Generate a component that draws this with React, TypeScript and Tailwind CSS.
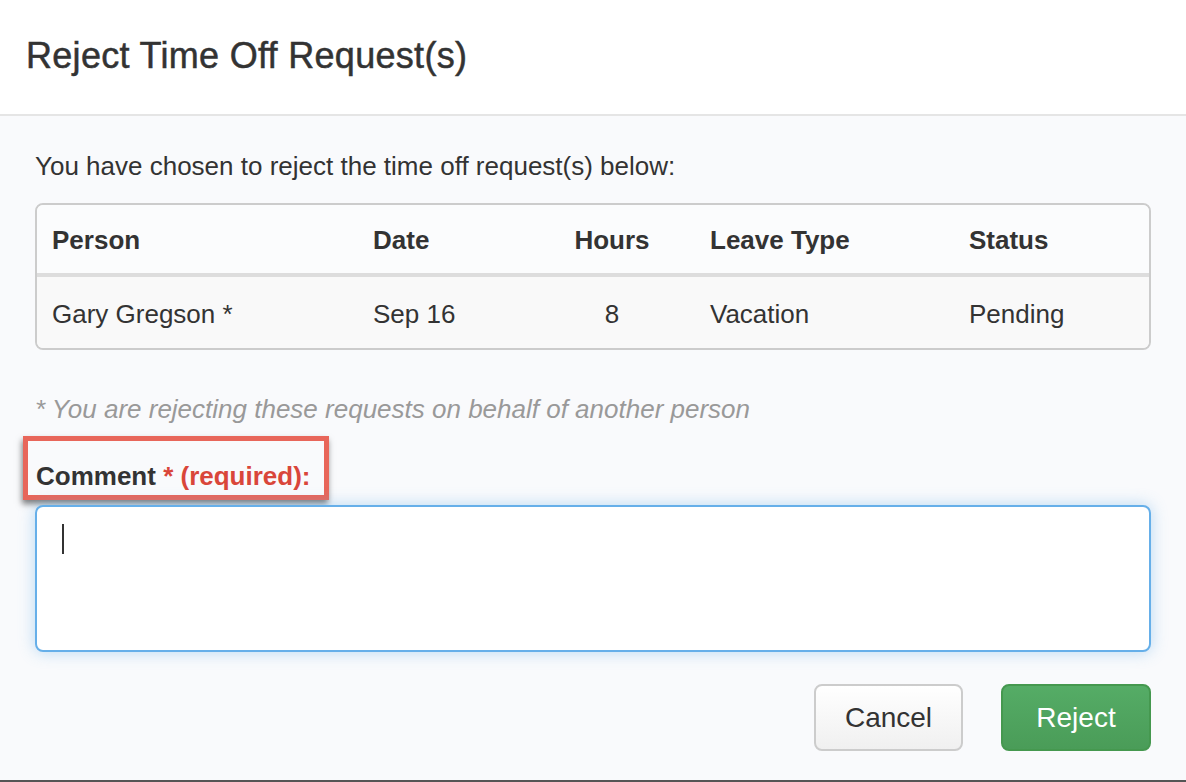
import React from "react";

export default function App() {
  const font = { fontFamily: '"Liberation Sans", Arial, Helvetica, sans-serif' };
  return (
    <div className="w-[1186px] h-[782px] flex flex-col bg-[#f9fafc] text-[#333] overflow-hidden" style={font}>
      <div className="h-[116px] shrink-0 bg-white border-b-2 border-[#e5e5e5] flex items-center pl-[26px] pb-[2px]">
        <h1 className="text-[36px] leading-none font-normal text-[#333] tracking-[0.3px] [-webkit-text-stroke:0.5px_#333]">Reject Time Off Request(s)</h1>
      </div>
      <div className="flex-1 flex flex-col pl-[35px] pr-[35px] pt-[32px] text-[26px] leading-[37px]">
        <p>You have chosen to reject the time off request(s) below:</p>
        <div className="mt-[18px] border-2 border-[#cccccc] rounded-[8px] overflow-hidden">
          <div className="grid grid-cols-[320px_173px_164px_259px_1fr] h-[68px] items-center bg-[#fbfcfd] font-bold pt-[2px]">
            <div className="pl-[15px]">Person</div>
            <div className="pl-[16px]">Date</div>
            <div className="text-center">Hours</div>
            <div className="pl-[16px]">Leave Type</div>
            <div className="pl-[16px]">Status</div>
          </div>
          <div className="h-[4px] bg-[#dddddd]" />
          <div className="grid grid-cols-[320px_173px_164px_259px_1fr] h-[71px] items-center bg-[#f9f9f9] pt-[4px]">
            <div className="pl-[15px]">Gary Gregson *</div>
            <div className="pl-[16px]">Sep 16</div>
            <div className="text-center">8</div>
            <div className="pl-[16px]">Vacation</div>
            <div className="pl-[16px]">Pending</div>
          </div>
        </div>
        <p className="mt-[41px] italic text-[#999999]">* You are rejecting these requests on behalf of another person</p>
        <div className="mt-[8px] ml-[-12px] w-[306px] h-[64px] border-[5px] border-[#e8665a] shadow-[-1px_4px_6px_rgba(0,0,0,0.5)] pl-[8px] pt-[17px]">
          <span className="font-bold">
            Comment <span className="text-[#d9463a]">* (required):</span>
          </span>
        </div>
        <div className="mt-[5px] h-[147px] bg-white border-2 border-[#66afe9] rounded-[8px] shadow-[0_0_16px_rgba(102,175,233,0.45)] pl-[25px] pt-[17px]">
          <div className="w-[2px] h-[30px] bg-[#333]" />
        </div>
        <div className="mt-[32px] flex justify-end gap-[38px]">
          <button className="w-[149px] h-[67px] rounded-[8px] border-2 border-[#cccccc] bg-gradient-to-b from-[#ffffff] to-[#f0f0f0] text-[28px] text-[#333]">
            Cancel
          </button>
          <button className="w-[150px] h-[67px] rounded-[8px] border-2 border-[#45984f] bg-gradient-to-b from-[#55ac66] to-[#4a9c58] text-[28px] text-white">
            Reject
          </button>
        </div>
      </div>
      <div className="h-[2px] bg-[#555] shrink-0" />
    </div>
  );
}
